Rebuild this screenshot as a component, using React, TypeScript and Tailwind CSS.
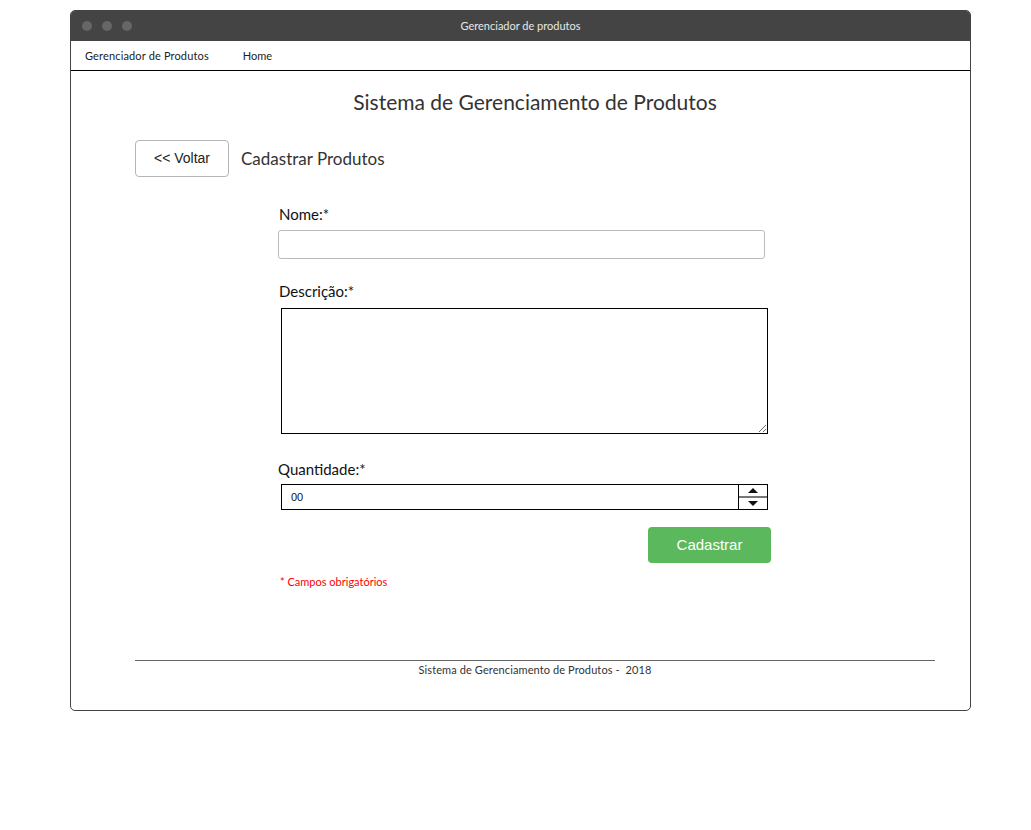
export default function App() {
  return (
    <div className="min-h-screen bg-white pt-[10px] pl-[70px]" style={{ fontFamily: 'Lato, "Open Sans", sans-serif' }}>
      <div className="w-[901px] h-[701px] border border-[#444] rounded-[5px] overflow-hidden flex flex-col">
        <div className="h-[30px] bg-[#444444] flex items-center relative shrink-0">
          <div className="flex gap-[10px] pl-[11px]">
            <span className="w-[10px] h-[10px] rounded-full bg-[#666]" />
            <span className="w-[10px] h-[10px] rounded-full bg-[#666]" />
            <span className="w-[10px] h-[10px] rounded-full bg-[#666]" />
          </div>
          <div className="absolute inset-0 flex items-center justify-center text-[11px] text-[#e8e8e8]">Gerenciador de produtos</div>
        </div>
        <nav className="h-[30px] border-b border-black flex items-center text-[11px] text-[#222] pl-[14px] pt-[1px] shrink-0">
          <span className="tracking-[0.15px]">Gerenciador de Produtos</span>
          <span className="ml-[34px]">Home</span>
        </nav>
        <main className="flex-1 pl-[64px] pr-[35px]">
          <h1 className="text-center text-[21px] text-[#333] mt-[18px] leading-[26px]">Sistema de Gerenciamento de Produtos</h1>
          <div className="flex items-center mt-[25px]">
            <button className="w-[94px] h-[37px] border border-[#b5b5b5] rounded-[4px] text-[14px] text-[#222] bg-white" style={{ fontFamily: '"Liberation Sans", Arial, sans-serif' }}>
              &lt;&lt; Voltar
            </button>
            <span className="ml-[12px] text-[17px] text-[#333]">Cadastrar Produtos</span>
          </div>
          <form className="ml-[143px] w-[492px] flex flex-col">
            <label className="text-[15px] text-[#111] mt-[27px] ml-[1px] leading-[20px]">Nome:*</label>
            <input className="mt-[6px] w-[487px] h-[29px] border border-[#bbb] rounded-[3px] outline-none" />
            <label className="text-[15px] text-[#111] mt-[22px] ml-[1px] leading-[20px]">Descrição:*</label>
            <textarea className="mt-[7px] ml-[3px] w-[487px] h-[126px] border border-black outline-none resize" />
            <label className="text-[15px] text-[#111] mt-[25px] leading-[20px]">Quantidade:*</label>
            <div className="mt-[5px] ml-[3px] w-[487px] h-[26px] border border-black flex">
              <div className="flex-1 flex items-center pl-[9px] text-[11px] text-[#111]" style={{ fontFamily: '"Liberation Sans", Arial, sans-serif' }}>00</div>
              <div className="w-[29px] border-l border-black flex flex-col">
                <div className="flex-1 flex items-center justify-center border-b-2 border-[#777]">
                  <svg width="10" height="5" viewBox="0 0 10 5"><path d="M0 5 L5 0 L10 5 Z" fill="#111" /></svg>
                </div>
                <div className="flex-1 flex items-center justify-center">
                  <svg width="10" height="5" viewBox="0 0 10 5"><path d="M0 0 L5 5 L10 0 Z" fill="#111" /></svg>
                </div>
              </div>
            </div>
            <div className="flex justify-end mt-[17px]">
              <button type="button" className="w-[123px] h-[36px] rounded-[4px] bg-[#5cb85c] text-white text-[15px] -mr-[1px]" style={{ fontFamily: '"Liberation Sans", Arial, sans-serif' }}>
                Cadastrar
              </button>
            </div>
            <p className="text-[11px] text-[#f00] mt-[11px] ml-[2px]">* Campos obrigatórios</p>
          </form>
          <div className="mt-[69px] border-t border-[#666]" />
          <p className="text-center text-[11px] text-[#333] mt-[1px] tracking-[0.1px]">Sistema de Gerenciamento de Produtos -&nbsp; 2018</p>
        </main>
      </div>
    </div>
  );
}
